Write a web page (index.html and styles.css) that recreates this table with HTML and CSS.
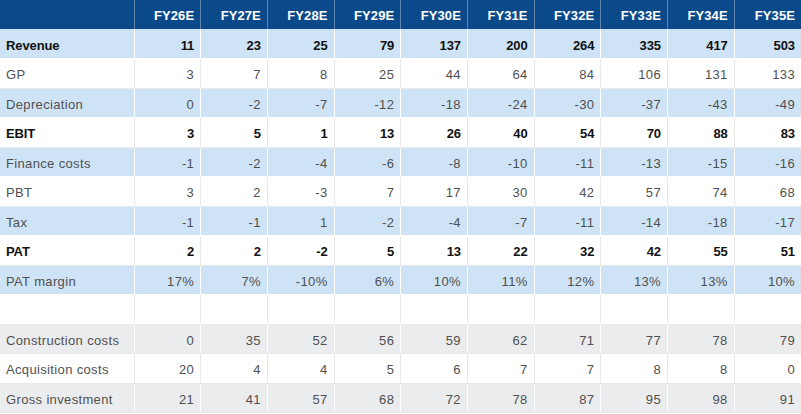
FILE: index.html
```html
<!DOCTYPE html>
<html>
<head>
<meta charset="utf-8">
<link rel="stylesheet" href="styles.css">
</head>
<body>
<table class="fin">
  <colgroup><col class="c-label"><col span="10"></colgroup>
  <thead>
    <tr class="hdr"><th></th><th>FY26E</th><th>FY27E</th><th>FY28E</th><th>FY29E</th><th>FY30E</th><th>FY31E</th><th>FY32E</th><th>FY33E</th><th>FY34E</th><th>FY35E</th></tr>
  </thead>
  <tbody>
    <tr class="blue bold"><td>Revenue</td><td>11</td><td>23</td><td>25</td><td>79</td><td>137</td><td>200</td><td>264</td><td>335</td><td>417</td><td>503</td></tr>
    <tr class="white"><td>GP</td><td>3</td><td>7</td><td>8</td><td>25</td><td>44</td><td>64</td><td>84</td><td>106</td><td>131</td><td>133</td></tr>
    <tr class="blue"><td>Depreciation</td><td>0</td><td>-2</td><td>-7</td><td>-12</td><td>-18</td><td>-24</td><td>-30</td><td>-37</td><td>-43</td><td>-49</td></tr>
    <tr class="white bold"><td>EBIT</td><td>3</td><td>5</td><td>1</td><td>13</td><td>26</td><td>40</td><td>54</td><td>70</td><td>88</td><td>83</td></tr>
    <tr class="blue"><td>Finance costs</td><td>-1</td><td>-2</td><td>-4</td><td>-6</td><td>-8</td><td>-10</td><td>-11</td><td>-13</td><td>-15</td><td>-16</td></tr>
    <tr class="white"><td>PBT</td><td>3</td><td>2</td><td>-3</td><td>7</td><td>17</td><td>30</td><td>42</td><td>57</td><td>74</td><td>68</td></tr>
    <tr class="blue"><td>Tax</td><td>-1</td><td>-1</td><td>1</td><td>-2</td><td>-4</td><td>-7</td><td>-11</td><td>-14</td><td>-18</td><td>-17</td></tr>
    <tr class="white bold"><td>PAT</td><td>2</td><td>2</td><td>-2</td><td>5</td><td>13</td><td>22</td><td>32</td><td>42</td><td>55</td><td>51</td></tr>
    <tr class="blue"><td>PAT margin</td><td>17%</td><td>7%</td><td>-10%</td><td>6%</td><td>10%</td><td>11%</td><td>12%</td><td>13%</td><td>13%</td><td>10%</td></tr>
    <tr class="white"><td></td><td></td><td></td><td></td><td></td><td></td><td></td><td></td><td></td><td></td><td></td></tr>
    <tr class="grey"><td>Construction costs</td><td>0</td><td>35</td><td>52</td><td>56</td><td>59</td><td>62</td><td>71</td><td>77</td><td>78</td><td>79</td></tr>
    <tr class="white"><td>Acquisition costs</td><td>20</td><td>4</td><td>4</td><td>5</td><td>6</td><td>7</td><td>7</td><td>8</td><td>8</td><td>0</td></tr>
    <tr class="grey"><td>Gross investment</td><td>21</td><td>41</td><td>57</td><td>68</td><td>72</td><td>78</td><td>87</td><td>95</td><td>98</td><td>91</td></tr>
  </tbody>
</table>
</body>
</html>
```

FILE: styles.css
```css
html, body {
  margin: 0;
  padding: 0;
  background: #ffffff;
}

.fin {
  width: 801px;
  table-layout: fixed;
  border-collapse: collapse;
  font-family: "Liberation Sans", Arial, sans-serif;
  font-size: 13px;
  color: #505050;
}

.c-label {
  width: 134px;
}

.fin th,
.fin td {
  height: 29.5px;
  padding: 3px 6px 0 6px;
  box-sizing: border-box;
  text-align: right;
  white-space: nowrap;
  border-right: 1px solid #e9e9eb;
  border-bottom: 1px solid #e9e9eb;
  letter-spacing: 0.35px;
}

.fin td:first-child {
  text-align: left;
}

.fin td:last-child,
.fin th:last-child {
  border-right: none;
}

.hdr th {
  height: 29px;
  padding-top: 2px;
  background: #0b4a8a;
  color: #ffffff;
  font-weight: bold;
  letter-spacing: 0.1px;
  border-right: 1px solid #5f84ad;
  border-bottom: none;
}

.blue td {
  background: #cfe3f6;
  border-right-color: #ffffff;
  border-bottom-color: #ffffff;
}

.white td {
  background: #ffffff;
}

.grey td {
  background: #ebecee;
  border-right-color: #ffffff;
}

.bold td {
  font-weight: bold;
  color: #111111;
  letter-spacing: -0.1px;
}
```
